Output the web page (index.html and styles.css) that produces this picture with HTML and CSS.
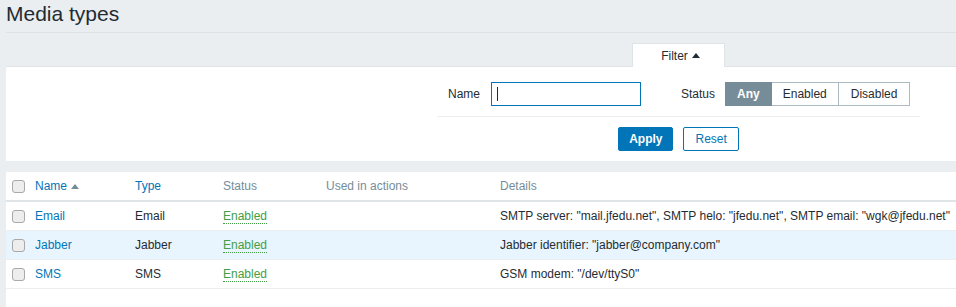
FILE: index.html
```html
<!DOCTYPE html>
<html lang="en">
<head>
  <meta charset="UTF-8">
  <title>Media types</title>
  <link rel="stylesheet" href="styles.css">
</head>
<body>
  <div class="page">
    <header class="header-title">
      <h1>Media types</h1>
    </header>

    <!-- Filter -->
    <div class="filter-tabs">
      <div class="filter-tab">Filter <span class="arrow-up"></span></div>
    </div>
    <div class="filter-panel">
      <div class="filter-form">
        <div class="filter-row">
          <div class="filter-field">
            <label for="filterName">Name</label>
            <div class="text-input"><span class="caret"></span></div>
          </div>
          <div class="filter-field">
            <label>Status</label>
            <div class="radio-list">
              <span class="radio-item selected">Any</span>
              <span class="radio-item">Enabled</span>
              <span class="radio-item">Disabled</span>
            </div>
          </div>
        </div>
        <div class="filter-buttons">
          <button class="btn btn-primary">Apply</button>
          <button class="btn btn-alt">Reset</button>
        </div>
      </div>
    </div>

    <!-- List -->
    <div class="list-container">
      <table class="list-table">
        <colgroup>
          <col class="col-cb">
          <col class="col-name">
          <col class="col-type">
          <col class="col-status">
          <col class="col-used">
          <col>
        </colgroup>
        <thead>
          <tr>
            <th><span class="checkbox"></span></th>
            <th><a href="#" class="sort">Name <span class="arrow-sort"></span></a></th>
            <th><a href="#" class="sort">Type</a></th>
            <th>Status</th>
            <th>Used in actions</th>
            <th>Details</th>
          </tr>
        </thead>
        <tbody>
          <tr>
            <td><span class="checkbox"></span></td>
            <td><a href="#">Email</a></td>
            <td>Email</td>
            <td><a href="#" class="status-enabled">Enabled</a></td>
            <td></td>
            <td>SMTP server: "mail.jfedu.net", SMTP helo: "jfedu.net", SMTP email: "wgk@jfedu.net"</td>
          </tr>
          <tr class="hover">
            <td><span class="checkbox"></span></td>
            <td><a href="#">Jabber</a></td>
            <td>Jabber</td>
            <td><a href="#" class="status-enabled">Enabled</a></td>
            <td></td>
            <td>Jabber identifier: "jabber@company.com"</td>
          </tr>
          <tr>
            <td><span class="checkbox"></span></td>
            <td><a href="#">SMS</a></td>
            <td>SMS</td>
            <td><a href="#" class="status-enabled">Enabled</a></td>
            <td></td>
            <td>GSM modem: "/dev/ttyS0"</td>
          </tr>
        </tbody>
      </table>
    </div>
  </div>
</body>
</html>
```

FILE: styles.css
```css
* {
  margin: 0;
  padding: 0;
  box-sizing: border-box;
}

html, body {
  overflow: hidden;
}

body {
  font-family: "Liberation Sans", Arial, sans-serif;
  font-size: 12px;
  line-height: 14px;
  color: #1f2c33;
  background-color: #ebeef0;
}

a {
  color: #0275b8;
  text-decoration: none;
}

/* The layout is wider than the window, like the original page */
.page {
  width: 1357px;
  padding: 0 6px;
}

.header-title {
  height: 33px;
  padding-top: 2px;
  border-bottom: 1px solid #dde2e5;
}

.header-title h1 {
  font-size: 21px;
  font-weight: normal;
  line-height: 24px;
}

/* Filter tab */
.filter-tabs {
  display: flex;
  justify-content: center;
  margin-top: 10px;
}

.filter-tab {
  position: relative;
  z-index: 1;
  display: flex;
  align-items: center;
  gap: 4px;
  height: 24px;
  margin-bottom: -1px;
  padding: 0 24px 0 28px;
  background-color: #fff;
  border: 1px solid #dfe4e7;
  border-bottom: none;
}

.arrow-up {
  width: 0;
  height: 0;
  border-left: 4px solid transparent;
  border-right: 4px solid transparent;
  border-bottom: 5px solid #1f2c33;
}

.filter-panel {
  background-color: #fff;
  border-top: 1px solid #dfe4e7;
  padding: 15px 0 10px;
}

.filter-form {
  width: 483px;
  margin: 0 auto;
}

.filter-row {
  display: flex;
  align-items: center;
  gap: 40px;
  padding: 0 10px 10px 11px;
  border-bottom: 1px solid #ebeef0;
}

.filter-field {
  display: flex;
  align-items: center;
  gap: 11px;
}

.filter-field + .filter-field {
  gap: 10px;
}

.text-input {
  display: flex;
  align-items: center;
  width: 150px;
  height: 24px;
  padding-left: 5px;
  border: 1px solid #0275b8;
  background-color: #fff;
}

.caret {
  width: 1px;
  height: 14px;
  background-color: #1f2c33;
}

.radio-list {
  display: flex;
}

.radio-item {
  height: 24px;
  line-height: 22px;
  padding: 0 11px;
  border: 1px solid #acbbc2;
  background-color: #fff;
}

.radio-item + .radio-item {
  border-left: none;
}

.radio-item:last-child {
  padding: 0 12px;
}

.radio-item.selected {
  background-color: #768d99;
  border-color: #768d99;
  color: #fff;
  font-weight: bold;
}

.filter-buttons {
  display: flex;
  justify-content: center;
  gap: 10px;
  margin-top: 10px;
}

.btn {
  height: 24px;
  padding: 0 11px;
  font-family: inherit;
  font-size: 12px;
  border: 1px solid #0275b8;
  border-radius: 2px;
  cursor: pointer;
}

.btn-primary {
  background-color: #0275b8;
  color: #fff;
  font-weight: bold;
  padding: 0 10px;
}

.btn-alt {
  background-color: #fff;
  color: #0275b8;
}

/* List table */
.list-container {
  margin-top: 11px;
  background-color: #fff;
  padding-bottom: 40px;
}

.list-table {
  width: 100%;
  border-collapse: collapse;
  table-layout: fixed;
}

.col-cb { width: 24px; }
.col-name { width: 100px; }
.col-type { width: 88px; }
.col-status { width: 103px; }
.col-used { width: 174px; }

.list-table th,
.list-table td {
  padding: 7px 5px;
  line-height: 14px;
  text-align: left;
  vertical-align: middle;
  white-space: nowrap;
}

.list-table th {
  font-weight: normal;
  color: #768d99;
  border-bottom: 2px solid #dfe4e7;
}

.list-table td {
  border-bottom: 1px solid #ebeef0;
}

.list-table th:first-child,
.list-table td:first-child {
  padding-left: 6px;
  padding-right: 0;
}

.list-table tr.hover td {
  background-color: #e8f5ff;
}

.sort {
  display: inline-flex;
  align-items: center;
  gap: 4px;
}

.arrow-sort {
  width: 0;
  height: 0;
  border-left: 4px solid transparent;
  border-right: 4px solid transparent;
  border-bottom: 5px solid #768d99;
}

.checkbox {
  display: block;
  width: 13px;
  height: 13px;
  border: 1px solid #a9a9a9;
  border-radius: 3px;
  background-color: #ededed;
}

.status-enabled {
  color: #429e47;
  border-bottom: 1px dotted #429e47;
}
```
